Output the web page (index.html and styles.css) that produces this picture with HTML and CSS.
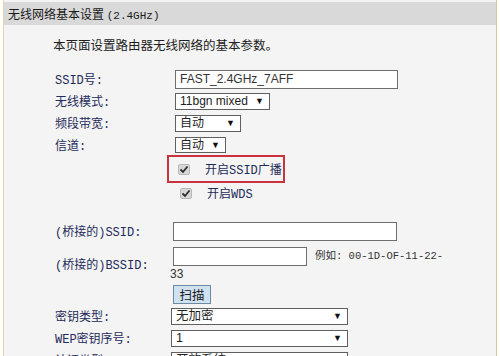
FILE: index.html
```html
<!DOCTYPE html>
<html lang="zh-CN">
<head>
    <meta charset="UTF-8">
    <title>无线网络基本设置</title>
    <link rel="stylesheet" href="styles.css">
</head>
<body>

    <div class="panel">
        <!-- Title bar -->
        <div class="panel-title">无线网络基本设置 <span class="band">(2.4GHz)</span></div>

        <div class="panel-body">
            <p class="desc">本页面设置路由器无线网络的基本参数。</p>

            <div class="row">
                <div class="label">SSID号:</div>
                <div class="field"><input class="text-input ssid" type="text" value="FAST_2.4GHz_7AFF"></div>
            </div>
            <div class="row">
                <div class="label">无线模式:</div>
                <div class="field"><div class="select top-select mode">11bgn mixed<span class="arrow">▼</span></div></div>
            </div>
            <div class="row">
                <div class="label">频段带宽:</div>
                <div class="field"><div class="select top-select width">自动<span class="arrow">▼</span></div></div>
            </div>
            <div class="row">
                <div class="label">信道:</div>
                <div class="field"><div class="select top-select channel">自动<span class="arrow">▼</span></div></div>
            </div>

            <!-- highlighted option -->
            <div class="check-row highlight">
                <span class="checkbox"><svg width="10" height="9" viewBox="0 0 10 9"><path d="M1.5 4.5 L4 7 L8.5 1.5" fill="none" stroke="#2b2b2b" stroke-width="1.8"/></svg></span>
                <span class="check-text">开启SSID广播</span>
            </div>
            <div class="check-row">
                <span class="checkbox"><svg width="10" height="9" viewBox="0 0 10 9"><path d="M1.5 4.5 L4 7 L8.5 1.5" fill="none" stroke="#2b2b2b" stroke-width="1.8"/></svg></span>
                <span class="check-text">开启WDS</span>
            </div>

            <div class="row bridge-first">
                <div class="label">(桥接的)SSID:</div>
                <div class="field"><input class="text-input bridge" type="text"></div>
            </div>
            <div class="row tall">
                <div class="label">(桥接的)BSSID:</div>
                <div class="field">
                    <input class="text-input bssid" type="text"><span class="hint">例如: 00-1D-OF-11-22-</span><br>33
                </div>
            </div>
            <div class="row">
                <div class="label"></div>
                <div class="field"><button class="scan-btn">扫描</button></div>
            </div>
            <div class="row">
                <div class="label">密钥类型:</div>
                <div class="field"><div class="select key-select">无加密<span class="arrow">▼</span></div></div>
            </div>
            <div class="row">
                <div class="label">WEP密钥序号:</div>
                <div class="field"><div class="select key-select">1<span class="arrow">▼</span></div></div>
            </div>
            <div class="row">
                <div class="label">认证类型:</div>
                <div class="field"><div class="select key-select">开放系统<span class="arrow">▼</span></div></div>
            </div>
        </div>
    </div>

</body>
</html>
```

FILE: styles.css
```css
body {
    margin: 0;
    padding: 0;
    background-color: #ffffff;
    font-family: "Liberation Mono", "Noto Sans CJK SC", monospace;
    overflow: hidden;
}
.panel {
    margin: 0 3px 0 3px;
    padding-top: 2px;
    border-left: 1px solid #e6d3ad;
    border-right: 1px solid #dcc497;
    background-color: #f4f4f4;
    height: 400px;
}
.panel-title {
    height: 23px;
    line-height: 23px;
    padding-left: 4px;
    background-color: #d9d9d9;
    color: #1a1a1a;
    font-family: "Noto Sans CJK SC", sans-serif;
    font-size: 12px;
}
.panel-title .band {
    font-family: "Liberation Mono", monospace;
    font-size: 11px;
}
.panel-body {
    padding-left: 51px;
    font-size: 12.5px;
    color: #1f2b5a;
}
.desc {
    margin: 12px 0 0 -2px;
    height: 31px;
    line-height: 16px;
    color: #202020;
    font-family: "Noto Sans CJK SC", sans-serif;
    font-size: 12.5px;
}
.row {
    display: flex;
    align-items: center;
    height: 22px;
}
.row.tall {
    height: 38px;
    margin-top: 3px;
}
.label {
    width: 115px;
    flex-shrink: 0;
    font-size: 12px;
}
.field {
    font-family: "Liberation Sans", "Noto Sans CJK SC", sans-serif;
    font-size: 12px;
    color: #333;
    line-height: 16px;
}
.text-input {
    box-sizing: border-box;
    height: 19px;
    border: 1px solid #6e6e6e;
    background-color: #ffffff;
    padding: 0 4px;
    font-family: "Liberation Sans", sans-serif;
    font-size: 12px;
    color: #333;
    outline: none;
}
.ssid {
    margin-left: 5px;
    width: 223px;
}
.bridge {
    margin-left: 3px;
    width: 224px;
}
.bssid {
    margin-left: 3px;
    width: 134px;
    vertical-align: middle;
}
.hint {
    margin-left: 8px;
    font-family: "Liberation Mono", "Noto Sans CJK SC", monospace;
    font-size: 10.5px;
    color: #333;
}
.select {
    box-sizing: border-box;
    position: relative;
    height: 17px;
    line-height: 15px;
    border: 1px solid #5f5f5f;
    background-color: #ffffff;
    padding-left: 4px;
    font-size: 12px;
    color: #222;
}
.select .arrow {
    position: absolute;
    right: 5px;
    top: 0;
    font-size: 9px;
    color: #111;
}
.top-select {
    margin-left: 5px;
}
.mode {
    width: 95px;
}
.width {
    width: 66px;
}
.channel {
    width: 51px;
    height: 16px;
}
.key-select {
    margin-left: 1px;
    width: 177px;
    font-size: 12.5px;
}
.check-row {
    display: flex;
    align-items: center;
    margin-left: 114px;
    padding-left: 11px;
    height: 20px;
    width: 105px;
}
.check-row.highlight {
    margin-top: -1px;
    height: 24px;
    width: 105px;
    padding-left: 9px;
    border: 2px solid #c8333d;
    margin-left: 112px;
}
.checkbox {
    display: inline-flex;
    align-items: center;
    justify-content: center;
    box-sizing: border-box;
    width: 12px;
    height: 11px;
    border: 1px solid #b9b9b9;
    border-radius: 2px;
    background-color: #d8d8d8;
}
.check-text {
    margin-left: 15px;
    font-size: 12px;
}
.bridge-first {
    margin-top: 17px;
}
.scan-btn {
    margin-left: 3px;
    height: 19px;
    width: 38px;
    padding: 0;
    border: 1px solid #6c8aa4;
    background-color: #cfe2f1;
    font-family: "Noto Sans CJK SC", sans-serif;
    font-size: 12.5px;
    color: #1a1a1a;
    line-height: 15px;
}
```
